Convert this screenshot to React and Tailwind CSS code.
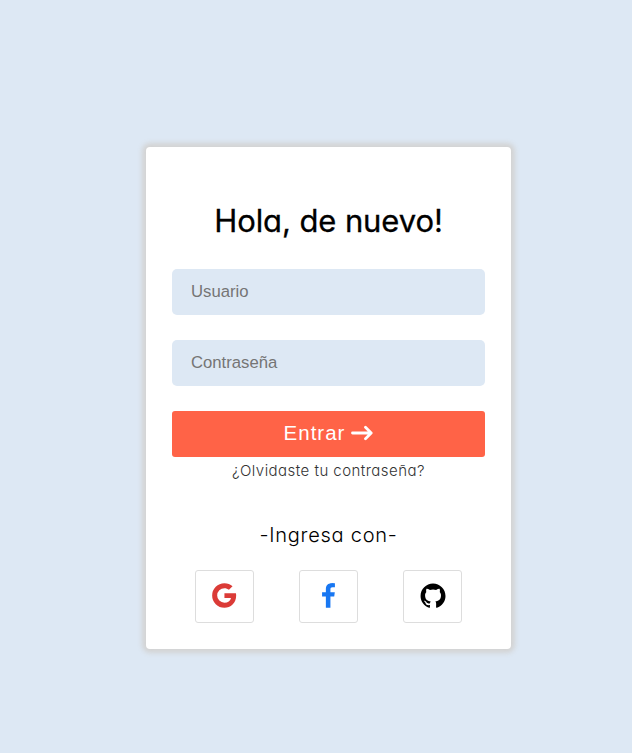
import { BiLogoGoogle, BiLogoFacebook, BiLogoGithub } from "react-icons/bi";

function Field({ type, label }) {
  return (
    <input
      type={type}
      aria-label={label}
      placeholder={label}
      className="block h-[46px] w-full rounded-[5px] bg-[#dde8f4] px-[19px] font-['Liberation_Sans',Arial,sans-serif] text-[16.7px] placeholder:text-[#757575]"
    />
  );
}

function SocialLink({ children }) {
  return (
    <a className="flex h-[53px] w-[59px] items-center justify-center rounded-[3px] border border-[#dddddd] pb-[2px]">
      {children}
    </a>
  );
}

export default function App() {
  return (
    <main className="flex h-[753px] w-full justify-center bg-[#dde8f4] pl-[25px] pt-[147px] font-[Inter,sans-serif] text-black">
      <section className="flex h-[502px] w-[365px] flex-col rounded-[4px] bg-white px-[26px] pt-[49px] shadow-[0_0_5px_4px_#d3d3d3]">
        <h1 className="h-12 whitespace-nowrap text-center text-[31px] leading-[49px] tracking-[-0.1px] [-webkit-text-stroke:0.3px_black] [font-feature-settings:'cv11']">
          Hola, de nuevo!
        </h1>
        <form className="mt-[25px] flex flex-col gap-[25px]">
          <Field type="text" label="Usuario" />
          <Field type="password" label="Contraseña" />
          <button
            type="button"
            className="flex h-[46px] items-center justify-center gap-[6px] rounded-[3px] bg-[#ff6347] pb-[2px] font-['Liberation_Sans',Arial,sans-serif] text-[20.5px] tracking-[1px] text-white"
          >
            Entrar
            <svg width="22" height="16" viewBox="0 0 22 16" fill="none" stroke="currentColor" strokeWidth="2.8" strokeLinecap="round" strokeLinejoin="round">
              <path d="M1.5 8h18.5M14.5 2.3 20.2 8l-5.7 5.7" />
            </svg>
          </button>
        </form>
        <a className="mt-[2px] h-6 whitespace-nowrap text-center text-[15px] font-light leading-6 tracking-[0.46px] text-[#333333] [font-feature-settings:'cv11']">
          ¿Olvidaste tu contraseña?
        </a>
        <p className="mt-[37px] h-[30px] whitespace-nowrap text-center text-[20px] font-light leading-[30px] tracking-[0.75px] [font-feature-settings:'cv11']">
          -Ingresa con-
        </p>
        <div className="mt-[20px] flex justify-center gap-[45px]">
          <SocialLink><BiLogoGoogle size={33} color="#db3b37" /></SocialLink>
          <SocialLink><BiLogoFacebook size={33} color="#1877f2" /></SocialLink>
          <SocialLink><BiLogoGithub size={30} color="#000000" /></SocialLink>
        </div>
      </section>
    </main>
  );
}
